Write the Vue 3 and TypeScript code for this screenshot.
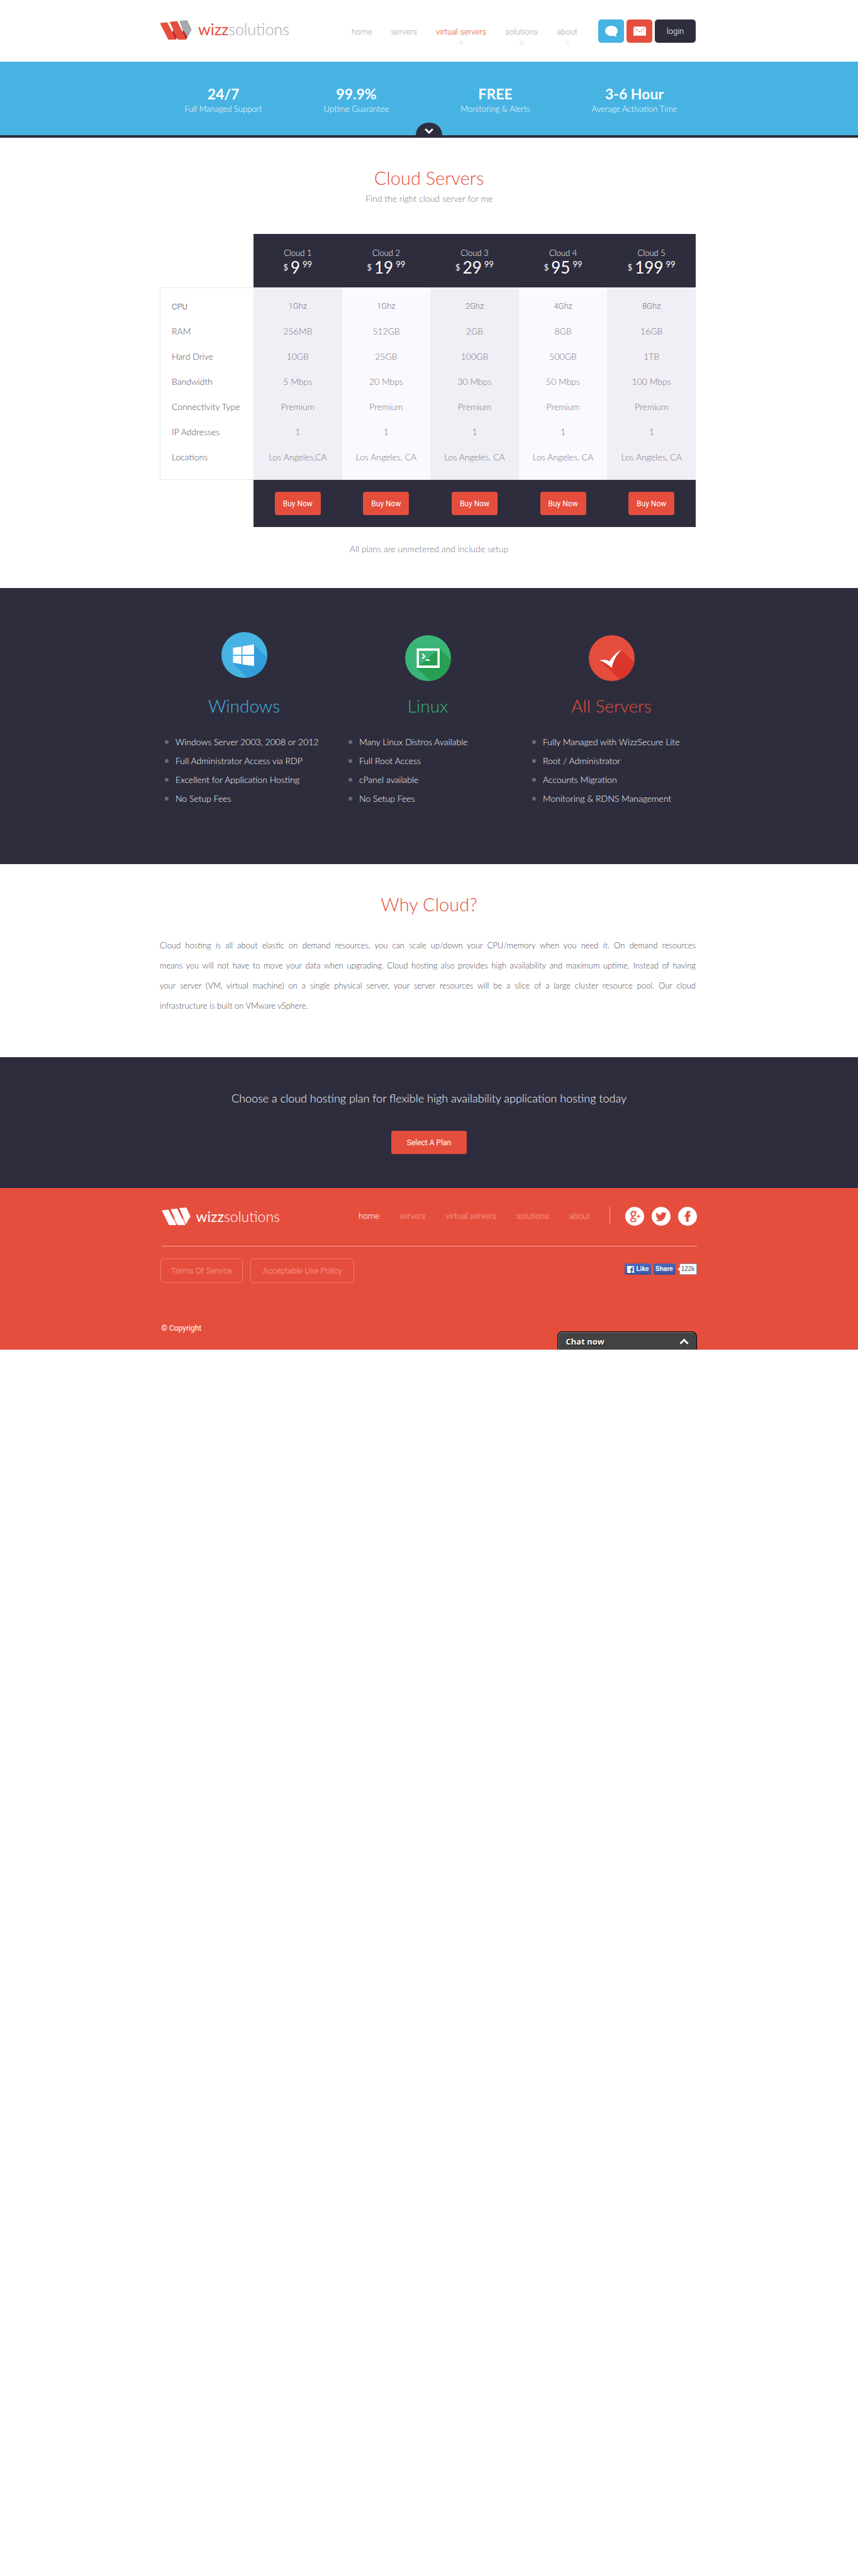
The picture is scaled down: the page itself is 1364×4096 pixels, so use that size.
<script setup lang="ts">
interface NavItem {
  label: string
  submenu: boolean
}
interface Plan {
  name: string
  dollars: string
  cents: string
}
interface SpecRow {
  label: string
  values: string[]
}
interface Platform {
  id: string
  title: string
  features: string[]
}

const navItems: NavItem[] = [
  { label: 'home', submenu: false },
  { label: 'servers', submenu: false },
  { label: 'virtual servers', submenu: true },
  { label: 'solutions', submenu: true },
  { label: 'about', submenu: true },
]

const stats = [
  { value: '24/7', label: 'Full Managed Support' },
  { value: '99.9%', label: 'Uptime Guarantee' },
  { value: 'FREE', label: 'Monitoring & Alerts' },
  { value: '3-6 Hour', label: 'Average Activation Time' },
]

const plans: Plan[] = [
  { name: 'Cloud 1', dollars: '9', cents: '99' },
  { name: 'Cloud 2', dollars: '19', cents: '99' },
  { name: 'Cloud 3', dollars: '29', cents: '99' },
  { name: 'Cloud 4', dollars: '95', cents: '99' },
  { name: 'Cloud 5', dollars: '199', cents: '99' },
]

const specs: SpecRow[] = [
  { label: 'CPU', values: ['1Ghz', '1Ghz', '2Ghz', '4Ghz', '8Ghz'] },
  { label: 'RAM', values: ['256MB', '512GB', '2GB', '8GB', '16GB'] },
  { label: 'Hard Drive', values: ['10GB', '25GB', '100GB', '500GB', '1TB'] },
  { label: 'Bandwidth', values: ['5 Mbps', '20 Mbps', '30 Mbps', '50 Mbps', '100 Mbps'] },
  { label: 'Connectivity Type', values: ['Premium', 'Premium', 'Premium', 'Premium', 'Premium'] },
  { label: 'IP Addresses', values: ['1', '1', '1', '1', '1'] },
  {
    label: 'Locations',
    values: ['Los Angeles,CA', 'Los Angeles, CA', 'Los Angeles, CA', 'Los Angeles, CA', 'Los Angeles, CA'],
  },
]

const platforms: Platform[] = [
  {
    id: 'windows',
    title: 'Windows',
    features: [
      'Windows Server 2003, 2008 or 2012',
      'Full Administrator Access via RDP',
      'Excellent for Application Hosting',
      'No Setup Fees',
    ],
  },
  {
    id: 'linux',
    title: 'Linux',
    features: ['Many Linux Distros Available', 'Full Root Access', 'cPanel available', 'No Setup Fees'],
  },
  {
    id: 'all',
    title: 'All Servers',
    features: [
      'Fully Managed with WizzSecure Lite',
      'Root / Administrator',
      'Accounts Migration',
      'Monitoring & RDNS Management',
    ],
  },
]

const whyLines: string[] = [
  'Cloud hosting is all about elastic on demand resources, you can scale up/down your CPU/memory when you need it. On demand resources',
  'means you will not have to move your data when upgrading. Cloud hosting also provides high availability and maximum uptime. Instead of having',
  'your server (VM, virtual machine) on a single physical server, your server resources will be a slice of a large cluster resource pool. Our cloud',
  'infrastructure is built on VMware vSphere.',
]
</script>

<template>
  <div class="page">
    <header class="header">
      <div class="container header-row">
        <a href="#" class="logo" aria-label="wizzsolutions">
          <svg class="logo-mark" viewBox="0 0 57 35" aria-hidden="true">
            <path d="M35 1.5 49 0 57 17.500 47 35z" fill="#a6a8ab" />
            <path d="M24 18 31 31 28 35H22L20 26zM42 18 49 30 47 35H40L38 26z" fill="#be1e2d" />
            <path d="M0 5.500 13 4 29 35H15zM17.500 3 31 2 47.500 35H32z" fill="#e54e3d" />
          </svg>
          <span class="logo-text"><b>wizz</b>solutions</span>
        </a>
        <nav class="nav">
          <a
            v-for="item in navItems"
            :key="item.label"
            href="#"
            :class="{ active: item.label === 'virtual servers', submenu: item.submenu }"
            >{{ item.label }}</a
          >
        </nav>
        <div class="actions">
          <button type="button" class="action chat" aria-label="Chat">
            <svg width="20" height="18" viewBox="0 0 22 20" aria-hidden="true">
              <path d="M11 0c6.200 0 11 3.900 11 9 0 2.600-1.300 5-3.200 6.600.2 1.600.8 2.700 1.900 3.700-2.300 0-4.200-.6-5.700-1.900-1.200.4-2.600.6-4 .6-6.200 0-11-3.900-11-9s4.800-9 11-9z" fill="#fff" />
            </svg>
          </button>
          <button type="button" class="action mail" aria-label="Mail">
            <svg width="20" height="15" viewBox="0 0 22 16" aria-hidden="true">
              <path d="M0 0h22v16H0z" fill="#fff" />
              <path d="M0 .5 11 9.500 22 .5" fill="none" stroke="#e54e3d" />
            </svg>
          </button>
          <button type="button" class="action login">login</button>
        </div>
      </div>
    </header>

    <section class="stats">
      <div class="stats-grid">
        <div v-for="stat in stats" :key="stat.value">
          <strong>{{ stat.value }}</strong>
          <span>{{ stat.label }}</span>
        </div>
      </div>
      <button type="button" class="stats-tab" aria-label="More">
        <svg width="14" height="10" viewBox="0 0 14 10" aria-hidden="true">
          <path d="M2 2l5 5 5-5" fill="none" stroke="#fff" stroke-width="3" stroke-linecap="round" />
        </svg>
      </button>
    </section>

    <main>
      <section class="pricing">
        <h1 class="title">Cloud Servers</h1>
        <p class="note">Find the right cloud server for me</p>
        <div class="container">
          <table class="plans">
            <thead>
              <tr>
                <td></td>
                <th v-for="plan in plans" :key="plan.name" scope="col">
                  <div class="plan-name">{{ plan.name }}</div>
                  <div class="price">
                    <span class="currency">$</span>
                    <span class="dollars">{{ plan.dollars }}</span>
                    <span class="cents">{{ plan.cents }}</span>
                  </div>
                </th>
              </tr>
            </thead>
            <tbody>
              <tr v-for="row in specs" :key="row.label">
                <th scope="row">{{ row.label }}</th>
                <td v-for="(value, i) in row.values" :key="i">{{ value }}</td>
              </tr>
            </tbody>
            <tfoot>
              <tr>
                <td></td>
                <td v-for="plan in plans" :key="plan.name">
                  <button type="button" class="btn buy">Buy Now</button>
                </td>
              </tr>
            </tfoot>
          </table>
        </div>
        <p class="note">All plans are unmetered and include setup</p>
      </section>

      <section class="platforms">
        <div class="container platform-grid">
          <article v-for="p in platforms" :key="p.id" :class="p.id">
            <div class="platform-icon">
              <svg v-if="p.id === 'windows'" viewBox="0 0 83 83" aria-hidden="true">
                <clipPath id="disc"><circle cx="41.500" cy="41.500" r="41.500" /></clipPath>
                <circle cx="41.500" cy="41.500" r="41.500" fill="#47b3e3" />
                <path d="M59 23 90 54V90H54L21 56z" fill="#329dda" clip-path="url(#disc)" />
                <path d="M21 28.500 36 26.500V41H21zM38 26 59 22.500V41H38zM21 43H36V58L21 55.500zM38 43H59V61.500L38 58.500z" fill="#fff" />
              </svg>
              <svg v-else-if="p.id === 'linux'" viewBox="0 0 83 83" aria-hidden="true">
                <clipPath id="disc-green"><circle cx="41.500" cy="41.500" r="41.500" /></clipPath>
                <circle cx="41.500" cy="41.500" r="41.500" fill="#3ab577" />
                <path d="M62 24 90 52V90H52L21 59z" fill="#289e52" clip-path="url(#disc-green)" />
                <path d="M21 24H62.500V59H21zM25 28V55H58.500V28z" fill="#fff" fill-rule="evenodd" />
                <path d="M31 33.500 35.500 38 31 42.500M37 45H44.500" fill="none" stroke="#fff" stroke-width="2.500" />
              </svg>
              <svg v-else viewBox="0 0 83 83" aria-hidden="true">
                <clipPath id="disc-red"><circle cx="41.500" cy="41.500" r="41.500" /></clipPath>
                <circle cx="41.500" cy="41.500" r="41.500" fill="#e54e3d" />
                <path d="M59 26.500 90 57V90H66L20 45.500 41 50z" fill="#db362b" clip-path="url(#disc-red)" />
                <path d="M20 45.500C27 43.500 33 44.500 37.500 47.500 43 38.500 50 31 59.500 26.500 50 35 45 45 41.500 59 35 53 28 48.500 20 45.500z" fill="#fff" />
              </svg>
            </div>
            <h2>{{ p.title }}</h2>
            <ul>
              <li v-for="f in p.features" :key="f">{{ f }}</li>
            </ul>
          </article>
        </div>
      </section>

      <section class="why">
        <h2 class="title">Why Cloud?</h2>
        <div class="container">
          <p>
            <span v-for="line in whyLines" :key="line">{{ line }}</span>
          </p>
        </div>
      </section>

      <section class="cta">
        <p>Choose a cloud hosting plan for flexible high availability application hosting today</p>
        <button type="button" class="btn select">Select A Plan</button>
      </section>
    </main>

    <footer class="footer">
      <div class="footer-inner">
        <div class="footer-top">
          <a href="#" class="logo logo-light" aria-label="wizzsolutions">
            <svg class="logo-mark" viewBox="0 0 52 32" aria-hidden="true">
              <path d="M22 18 28 28 26 32H20zM38 18 44 28 42 32H36z" fill="#ffa998" />
              <path d="M0 5 12 4 26 32H13zM16 3 28 2 42.500 32H29zM32 1 44.500 0 52 16 44 30z" fill="#fff" />
            </svg>
            <span class="logo-text"><b>wizz</b>solutions</span>
          </a>
          <nav class="footer-nav">
            <a v-for="item in navItems" :key="item.label" href="#" :class="{ active: item.label === 'home' }">{{
              item.label
            }}</a>
          </nav>
          <div class="social">
            <a href="#" aria-label="Google Plus">
              <svg viewBox="0 0 34 34" aria-hidden="true">
                <circle cx="17" cy="17" r="17" fill="#fff" />
                <g fill="none" stroke="#e54e3d">
                  <ellipse cx="14.500" cy="12.500" rx="3.800" ry="4.200" stroke-width="2.400" />
                  <path d="M16 8.800H21" stroke-width="1.500" />
                  <path d="M13 16.500c-2 1.500-1 3 1 3.800 2.500.8 5 1.600 5 3.600 0 1.600-1.800 2.700-4.500 2.700-3 0-4.800-1.200-4.800-3s1.800-2.800 4.300-3" stroke-width="2" />
                  <path d="M24 14V20M21 17H27" stroke-width="1.500" />
                </g>
              </svg>
            </a>
            <a href="#" aria-label="Twitter">
              <svg viewBox="0 0 34 34" aria-hidden="true">
                <circle cx="17" cy="17" r="17" fill="#fff" />
                <path d="M27 11.500c-.7.3-1.500.5-2.300.6.800-.5 1.500-1.300 1.800-2.200-.8.5-1.700.8-2.600 1a4.100 4.100 0 0 0-7 3.700c-3.400-.2-6.400-1.800-8.500-4.300a4.100 4.100 0 0 0 1.300 5.500c-.7 0-1.300-.2-1.900-.5 0 2 1.400 3.700 3.300 4.100-.6.200-1.200.2-1.900.1.500 1.600 2 2.800 3.900 2.800A8.300 8.300 0 0 1 7 24c7.500 4.500 18-.3 18-10.400.8-.6 1.500-1.300 2-2.100z" fill="#e54e3d" />
              </svg>
            </a>
            <a href="#" aria-label="Facebook">
              <svg viewBox="0 0 34 34" aria-hidden="true">
                <circle cx="17" cy="17" r="17" fill="#fff" />
                <path d="M14.500 27V18H12V14h2.500v-2c0-3.200 1.700-4.700 4.500-4.700h3V11h-1.700c-1.100 0-1.400.5-1.400 1.500V14H22l-.4 4h-2.700v9z" fill="#e54e3d" />
              </svg>
            </a>
          </div>
        </div>
        <div class="footer-mid">
          <div class="policies">
            <a href="#" class="terms">Terms Of Service</a>
            <a href="#" class="policy">Acceptable Use Policy</a>
          </div>
          <div class="fb">
            <button type="button" class="fb-like">
              <svg width="11" height="11" viewBox="0 0 12 12" aria-hidden="true">
                <path d="M0 0h12v12H9V7.500h1.500L11 5.500H9V4.500c0-.7.300-1 1-1h1v-2H9.300C7.600 1.500 6.800 2.500 6.800 4v1.500H5v2h1.800V12H0z" fill="#fff" />
              </svg>
              Like
            </button>
            <button type="button" class="fb-share">Share</button>
            <span class="fb-count">122k</span>
          </div>
        </div>
        <p class="copyright">© Copyright</p>
        <button type="button" class="chat-bar">
          Chat now
          <svg width="15" height="10" viewBox="0 0 15 10" aria-hidden="true">
            <path d="M1.500 8.500 7.500 2.500 13.500 8.500" fill="none" stroke="#fff" stroke-width="3" />
          </svg>
        </button>
      </div>
    </footer>
  </div>
</template>

<style>
body {
  margin: 0;
  background: #fff;
}
</style>

<style scoped>
.page {
  font-family: Lato, sans-serif;
  font-size: 14px;
  font-weight: 300;
  line-height: 20px;
  color: #74727f;
}
.page * {
  box-sizing: border-box;
}
h1,
h2,
p,
ul {
  margin: 0;
  padding: 0;
  font-weight: 300;
}
a {
  text-decoration: none;
}
button {
  border: 0;
  padding: 0;
  cursor: pointer;
  font-family: Roboto, sans-serif;
}
svg {
  display: block;
}
.container {
  max-width: 856px;
  margin: 0 auto;
  padding-right: 4px;
}
.title {
  color: #e54e3d;
  font-size: 29px;
  line-height: 36px;
  text-align: center;
}

/* header */
.header-row {
  display: flex;
  height: 98px;
}
.logo {
  display: flex;
  align-items: flex-start;
  color: #a6a8ab;
}
.header .logo {
  padding-top: 32px;
}
.header .logo-mark {
  width: 51px;
  height: 31px;
}
.logo-text {
  margin-left: 10px;
  font-size: 25px;
  line-height: 28px;
}
.logo-text b {
  font-weight: 400;
  color: #e54e3d;
}
.nav {
  display: flex;
  gap: 30px;
  margin: 41px 33px 0 auto;
  font-family: Roboto, sans-serif;
  font-size: 13px;
}
.nav a {
  position: relative;
  height: 20px;
  color: #a8a8a8;
}
.nav a.active {
  color: #e54e3d;
}
.nav a.submenu::after {
  content: '';
  position: absolute;
  top: 24px;
  left: 50%;
  width: 6px;
  height: 6px;
  margin-left: -3px;
  border: 1px solid #dfdfe8;
  border-radius: 50%;
  box-sizing: border-box;
}
.actions {
  display: flex;
  gap: 4px;
  padding-top: 31px;
}
.action {
  display: flex;
  align-items: center;
  justify-content: center;
  width: 41px;
  height: 37px;
  border-radius: 5px;
  color: #fff;
}
.action.chat {
  background: #47b3e3;
}
.action.mail {
  background: #e54e3d;
}
.action.login {
  width: 65px;
  background: #2e2d3d;
  font-size: 13px;
  font-weight: 300;
}

/* stats */
.stats {
  position: relative;
  height: 121px;
  padding-left: 9px;
  background: #47b3e3;
  border-bottom: 4px solid #2e2d3d;
  color: #fff;
}
.stats-grid {
  display: grid;
  grid-template-columns: 202fr 221fr 221fr 221fr;
  max-width: 865px;
  margin: 0 auto;
  padding-top: 37px;
  text-align: center;
}
.stats strong,
.stats span {
  display: block;
}
.stats strong {
  font-size: 23px;
  font-weight: 700;
  line-height: 28px;
}
.stats span {
  font-size: 13px;
}
.stats-tab {
  position: absolute;
  bottom: 0;
  left: 50%;
  display: flex;
  align-items: center;
  justify-content: center;
  width: 42px;
  height: 20px;
  margin-left: -21px;
  padding-top: 8px;
  background: #2e2d3d;
  border-radius: 21px 21px 0 0;
}

/* pricing */
.pricing {
  padding: 46px 0 52px;
}
.note {
  margin-top: 5px;
  text-align: center;
}
.pricing .container + .note {
  margin-top: 25px;
}
.plans {
  width: 100%;
  margin-top: 46px;
  table-layout: fixed;
  border-collapse: separate;
  border-spacing: 0;
  text-align: center;
}
.plans th,
.plans td {
  padding: 0;
  font-weight: 300;
}
.plans tr > :first-child {
  width: 149px;
}
.plans thead th,
.plans tfoot td:not(:first-child) {
  background: #2e2d3d;
  color: #fff;
}
.plans thead th {
  height: 85px;
  padding-top: 22px;
  vertical-align: top;
  font-weight: 400;
}
.plan-name {
  font-size: 13px;
  font-weight: 300;
  line-height: 16px;
}
.price {
  display: flex;
  justify-content: center;
  gap: 4px;
  font-size: 13px;
}
.dollars {
  font-size: 26px;
  line-height: 30px;
}
.currency {
  line-height: 30px;
}
.cents {
  line-height: 20px;
}
.plans tbody tr {
  height: 40px;
}
.plans tbody tr:first-child {
  height: 50px;
  font-family: Roboto, sans-serif;
  font-size: 13px;
}
.plans tbody tr:first-child > * {
  padding-top: 10px;
}
.plans tbody tr:last-child {
  height: 56px;
}
.plans tbody tr:last-child > * {
  padding-bottom: 16px;
}
.plans tbody th {
  padding-left: 18px;
  border-left: 1px solid #e6e6e8;
  color: #4c4a58;
  text-align: left;
}
.plans tbody tr:first-child th {
  border-top: 1px solid #e6e6e8;
}
.plans tbody tr:last-child th {
  border-bottom: 1px solid #e6e6e8;
}
.plans tbody td:nth-child(even) {
  background: #f0eff5;
}
.plans tbody td:nth-child(odd) {
  background: #faf9ff;
}
.plans tfoot td {
  height: 75px;
}
.btn {
  background: #e54e3d;
  border-radius: 4px;
  color: #fff;
  font-size: 12px;
}
.buy {
  width: 73px;
  height: 37px;
}

/* platforms */
.platforms {
  padding: 70px 0 89px;
  background: #2e2d3d;
  color: #fff;
}
.platform-grid {
  display: grid;
  grid-template-columns: repeat(3, 1fr);
  gap: 24px;
}
.platform-icon {
  display: flex;
  justify-content: center;
  align-items: flex-end;
  height: 78px;
}
.windows .platform-icon {
  align-items: flex-start;
}
.platform-icon svg {
  width: 73px;
  height: 73px;
}
.platforms h2 {
  margin-top: 22px;
  font-size: 28px;
  line-height: 34px;
  text-align: center;
}
.windows h2 {
  color: #47b3e3;
}
.linux h2 {
  color: #3ab577;
}
.all h2 {
  color: #e54e3d;
}
.platforms ul {
  margin-top: 26px;
  padding-left: 8px;
  list-style: none;
}
.platforms li {
  display: flex;
  align-items: center;
  gap: 11px;
  line-height: 30px;
}
.platforms li::before {
  content: '';
  width: 6px;
  height: 6px;
  border-radius: 50%;
  background: #6b6a76;
}

/* why */
.why {
  padding: 46px 0 66px;
}
.why p {
  margin-top: 31px;
  color: #4c4a58;
  font-size: 13px;
  line-height: 32px;
}
.why span {
  display: block;
  text-align: justify;
  text-align-last: justify;
}
.why span:last-child {
  text-align-last: left;
}

/* call to action */
.cta {
  padding: 53px 0 54px;
  background: #2e2d3d;
  color: #fff;
  text-align: center;
}
.cta p {
  font-size: 18px;
  line-height: 24px;
}
.select {
  width: 120px;
  height: 37px;
  margin-top: 40px;
  display: inline-block;
  vertical-align: top;
}

/* footer */
.footer {
  background: #e54e3d;
  color: #fff;
  font-family: Roboto, sans-serif;
}
.footer-inner {
  position: relative;
  max-width: 851px;
  margin: 0 auto;
  padding: 30px 0 26px;
}
.footer-top {
  display: flex;
  align-items: center;
  padding-bottom: 32px;
  border-bottom: 1px solid #f6a498;
}
.logo-light .logo-mark {
  width: 46px;
  height: 28px;
}
.logo-light .logo-text {
  margin-left: 9px;
  color: #fff;
  font-family: Lato, sans-serif;
  font-size: 23px;
}
.logo-light b {
  color: #fff;
}
.footer-nav {
  display: flex;
  gap: 32px;
  margin-left: auto;
}
.footer-nav a,
.policies a {
  color: #ffa594;
  font-size: 13px;
}
.footer-nav a.active {
  color: #fff;
}
.social {
  display: flex;
  gap: 12px;
  margin-left: 31px;
}
.social::before {
  content: '';
  width: 1px;
  height: 28px;
  margin-right: 12px;
  background: #f6a498;
}
.social svg {
  width: 30px;
  height: 30px;
}
.footer-mid {
  display: flex;
  justify-content: space-between;
  align-items: flex-start;
  padding-top: 19px;
}
.policies {
  display: flex;
  gap: 12px;
  margin-left: -2px;
}
.policies a {
  height: 39px;
  padding: 0 16px;
  border: 1px solid #f07c6c;
  border-radius: 5px;
  line-height: 37px;
}
.policies .policy {
  padding: 0 19px;
}
.fb {
  display: flex;
  padding-top: 8px;
}
.fb button,
.fb-count {
  height: 18px;
  border-radius: 2px;
  font-family: 'Liberation Sans', Arial, sans-serif;
  font-size: 10px;
  line-height: 18px;
}
.fb button {
  background: linear-gradient(#4c69ba, #3b55a0);
  color: #fff;
  font-weight: 700;
}
.fb .fb-like {
  display: flex;
  align-items: center;
  gap: 4px;
  width: 42px;
  padding-left: 4px;
}
.fb .fb-share {
  width: 35px;
  margin-left: 4px;
}
.fb-count {
  position: relative;
  width: 28px;
  margin-left: 6px;
  background: #fff;
  border: 1px solid #8a93a8;
  color: #4b4f56;
  font-weight: 400;
  line-height: 16px;
  text-align: center;
}
.fb-count::before {
  content: '';
  position: absolute;
  top: 6px;
  left: -3px;
  width: 4px;
  height: 4px;
  background: #fff;
  transform: rotate(45deg);
}
.copyright {
  margin-top: 64px;
  font-size: 12px;
  font-weight: 400;
  line-height: 16px;
}
.chat-bar {
  position: absolute;
  right: 0;
  bottom: 0;
  display: flex;
  align-items: center;
  justify-content: space-between;
  width: 222px;
  height: 29px;
  padding: 2px 12px 0 13px;
  background: #434343;
  border: 1px solid #000;
  border-bottom: 0;
  border-radius: 8px 8px 0 0;
  box-shadow: inset 1px 1px 1px #777;
  color: #fff;
  font-family: 'Open Sans', sans-serif;
  font-size: 13px;
  font-weight: 700;
  text-shadow: 1px 1px 1px #000;
}
</style>
